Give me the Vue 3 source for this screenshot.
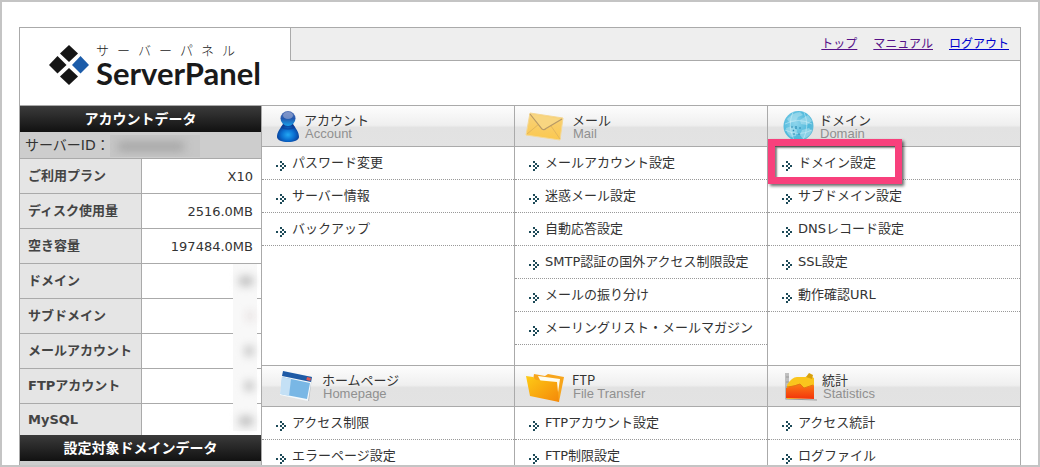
<script setup>
const logoRuby = [...'サーバーパネル']

const nav = [
  { text: 'トップ', visited: true },
  { text: 'マニュアル', visited: true },
  { text: 'ログアウト', visited: false },
]

const account = [
  { label: 'ご利用プラン', value: 'X10' },
  { label: 'ディスク使用量', value: '2516.0MB' },
  { label: '空き容量', value: '197484.0MB' },
  { label: 'ドメイン', mask: 'wide' },
  { label: 'サブドメイン', mask: 'faint' },
  { label: 'メールアカウント', mask: 'narrow' },
  { label: 'FTPアカウント', mask: 'narrow' },
  { label: 'MySQL', mask: 'wide' },
]

const sections = [
  { icon: 'account', title: 'アカウント', sub: 'Account', links: ['パスワード変更', 'サーバー情報', 'バックアップ'] },
  { icon: 'mail', title: 'メール', sub: 'Mail', links: ['メールアカウント設定', '迷惑メール設定', '自動応答設定', 'SMTP認証の国外アクセス制限設定', 'メールの振り分け', 'メーリングリスト・メールマガジン'] },
  { icon: 'domain', title: 'ドメイン', sub: 'Domain', marked: 'ドメイン設定', links: ['ドメイン設定', 'サブドメイン設定', 'DNSレコード設定', 'SSL設定', '動作確認URL'] },
  { icon: 'home', title: 'ホームページ', sub: 'Homepage', links: ['アクセス制限', 'エラーページ設定'] },
  { icon: 'ftp', title: 'FTP', sub: 'File Transfer', links: ['FTPアカウント設定', 'FTP制限設定'] },
  { icon: 'stats', title: '統計', sub: 'Statistics', links: ['アクセス統計', 'ログファイル'] },
]
</script>

<template>
  <div class="frame">
    <div class="panel">
      <header class="top">
        <div class="brand">
          <svg class="mark" width="42" height="42" viewBox="0 0 42 42" aria-hidden="true">
            <path d="M21 1l9 8.500-9 8.500-9-8.500z" fill="#151515" />
            <path d="M9.500 12l9 9-9 8.500-8.500-8.500z" fill="#151515" />
            <path d="M32.500 12l8.500 9-8.500 8.500-8.500-8.500z" fill="#1c5ca9" />
            <path d="M21 24l9 8.500-9 8.500-9-8.500z" fill="#151515" />
          </svg>
          <div class="wordmark">
            <div class="ruby"><span v-for="(c, i) in logoRuby" :key="i">{{ c }}</span></div>
            <div class="name">ServerPanel</div>
          </div>
        </div>
        <nav class="nav">
          <a v-for="n in nav" :key="n.text" href="#" :class="{ visited: n.visited }">{{ n.text }}</a>
        </nav>
      </header>

      <div class="body">
        <aside class="side">
          <h2 class="bar">アカウントデータ</h2>
          <div class="server">サーバーID：<span class="blurred"><i></i></span></div>
          <table class="data">
            <tbody>
              <tr v-for="row in account" :key="row.label">
                <th scope="row">{{ row.label }}</th>
                <td>
                  {{ row.value }}
                  <span v-if="row.mask" class="mask" :class="row.mask"></span>
                </td>
              </tr>
            </tbody>
          </table>
          <h2 class="bar">設定対象ドメインデータ</h2>
          <div class="server"></div>
        </aside>

        <main class="grid">
          <section v-for="s in sections" :key="s.sub" class="group">
            <div class="head">
              <svg v-if="s.icon === 'account'" width="32" height="40" viewBox="0 0 32 40" aria-hidden="true">
                <defs>
                  <radialGradient id="body" cx=".5" cy=".6" r=".6">
                    <stop offset="0" stop-color="#22a8f4" /><stop offset=".5" stop-color="#0a6ed0" /><stop offset="1" stop-color="#0b3186" />
                  </radialGradient>
                  <linearGradient id="ball" x2="0" y2="1">
                    <stop offset="0" stop-color="#5c78b8" /><stop offset=".5" stop-color="#2358ae" /><stop offset="1" stop-color="#19a0ea" />
                  </linearGradient>
                </defs>
                <path d="M11 18c-3 5-6 8-6 13 0 3 5 5 11 5s11-2 11-5c0-5-3-8-6-13z" fill="url(#body)" />
                <circle cx="16" cy="12.500" r="7.500" fill="url(#ball)" />
                <ellipse cx="16" cy="9.500" rx="5" ry="3.500" fill="#9aa9d2" opacity=".65" />
                <path d="M9 21q7 4 14 0" fill="none" stroke="#0b3b96" stroke-width="1.500" opacity=".6" />
              </svg>
              <svg v-else-if="s.icon === 'mail'" width="47" height="40" viewBox="0 0 47 40" aria-hidden="true">
                <defs><linearGradient id="env" x2="0" y2="1"><stop offset="0" stop-color="#f8d27b" /><stop offset="1" stop-color="#fbc84e" /></linearGradient></defs>
                <path d="M5 7l33 5-3 22-34-5z" fill="url(#env)" stroke="#f5d894" />
                <path d="M2 28l12-10M35 33l-9-13" stroke="#e3b65c" fill="none" />
                <path d="M5 8l12 15q2 1.500 4-.5L37 13" fill="#f8d681" stroke="#b89a66" stroke-width="1.200" />
              </svg>
              <svg v-else-if="s.icon === 'domain'" width="41" height="40" viewBox="0 0 41 40" aria-hidden="true">
                <defs><radialGradient id="globe" cx=".4" cy=".4" r=".65"><stop offset="0" stop-color="#8fd5ec" /><stop offset=".7" stop-color="#50b9dc" /><stop offset="1" stop-color="#65bdd9" /></radialGradient></defs>
                <circle cx="20.500" cy="20" r="15" fill="url(#globe)" />
                <path d="M9 13q5-6 13-7l3 3-5 2-2 4-6 2zM22 14l8-5 4 6-5 4-6-1zM8 22l6-2 5 4-1 6-5 1q-5-4-5-9zM24 24l7-2 3 3q-3 6-9 8l-3-4z" fill="#b5e4f1" opacity=".55" />
                <path d="M7 18q13-7 27 0M7 24q14 7 27 0M15 6q-6 14 1 28M26 6q6 14-1 28" fill="none" stroke="#d7f3fa" stroke-width=".5" />
                <path d="M13 21h2M15 24l1 1M18 20v3M21 22h2M15 28h2M20 28h2" stroke="#2e8cb4" stroke-width="1.200" />
              </svg>
              <svg v-else-if="s.icon === 'home'" width="50" height="40" viewBox="0 0 50 40" aria-hidden="true">
                <path d="M11 6l29 5-3 24-3-1z" fill="#b7bdc3" />
                <path d="M11 5l29 6-4 24-28-6z" fill="#f4f9fc" />
                <path d="M11 5l29 6-1 5-29-6z" fill="#1e5aa5" />
                <path d="M35 11l4 1-.7 3-4-1z" fill="#da5957" />
                <path d="M10 11l28 6-3 16-26-5z" fill="#79b7e5" />
                <path d="M10 11l9 2-2 17-9-2z" fill="#c4e0f5" />
              </svg>
              <svg v-else-if="s.icon === 'ftp'" width="47" height="40" viewBox="0 0 47 40" aria-hidden="true">
                <defs><linearGradient id="fold" x2="1" y2="1"><stop offset="0" stop-color="#fecb16" /><stop offset="1" stop-color="#f48809" /></linearGradient></defs>
                <path d="M9 8l11 2 3-2 16 3-5 25L7 20z" fill="#f7a51c" />
                <path d="M13 10l22 3-3 20-15-15z" fill="#fffdf0" />
                <path d="M1 10l7 1 3 3 21 2 2 20-29-6z" fill="url(#fold)" />
              </svg>
              <svg v-else width="44" height="40" viewBox="0 0 44 40" aria-hidden="true">
                <defs><linearGradient id="area" x2="0" y2="1"><stop offset="0" stop-color="#fb7b17" /><stop offset="1" stop-color="#f3340b" /></linearGradient></defs>
                <path d="M8 7v26l31 1M8 11h3M8 16h3M8 21h3M10 7v20" fill="none" stroke="#9b9b9b" stroke-width="1.200" />
                <path d="M9 19q5-8 10-8l8 0 5-1 4 2v20l-27 1z" fill="#fac51d" />
                <path d="M28 11l3-4 4 2-1 4z" fill="#d8a00c" />
                <path d="M8 22l6-2 8-2 4 4 10-3v14l-28-1z" fill="url(#area)" />
                <path d="M9 21l7-1 6-2 4 4 9-3" fill="none" stroke="#e37712" />
              </svg>
              <div>
                <h3>{{ s.title }}</h3>
                <p>{{ s.sub }}</p>
              </div>
            </div>
            <ul>
              <li v-for="l in s.links" :key="l">
                <svg class="arrow" width="10" height="10" viewBox="0 0 10 10" aria-hidden="true" shape-rendering="crispEdges">
                  <path d="M0 4h2v2H0zM4 0h2v2H4zM6 2h2v2H6zM8 4h2v2H8zM6 6h2v2H6zM4 8h2v2H4zM4 4h2v2H4z" fill="#1d4a58" />
                </svg>
                <a href="#">{{ l }}</a>
                <span v-if="l === s.marked" class="callout"></span>
              </li>
            </ul>
          </section>
        </main>
      </div>
    </div>
  </div>
</template>

<style>
body { margin: 0; background: #fff; }
</style>

<style scoped>
* { box-sizing: border-box; }
h2, h3, p, ul { margin: 0; padding: 0; font-weight: normal; }
.frame {
  height: 100vh;
  overflow: hidden;
  border: 2px solid #c4c4c4;
  padding: 25px 17px 0;
  font: 13px/20px "DejaVu Sans", "Noto Sans CJK JP", sans-serif;
  color: #333;
}
.panel { border: 1px solid #aaa; border-bottom: 0; }
.top { display: flex; align-items: flex-start; height: 78px; border-bottom: 1px solid #aaa; }
.brand { display: flex; width: 270px; padding: 15px 0 0 28px; gap: 6px; }
.mark { margin-top: 1px; }
.wordmark { color: #1a1a1a; }
.ruby { display: flex; gap: 8px; line-height: 14px; font-family: "Noto Sans CJK JP", sans-serif; font-weight: 300; }
.name { font: 700 31px/32px Lato, "Open Sans", sans-serif; }
.nav {
  flex: 1;
  display: flex;
  justify-content: flex-end;
  gap: 16px;
  height: 33px;
  padding: 6px 11px 0 0;
  background: #eee;
  border-left: 1px solid #aaa;
  border-bottom: 1px solid #aaa;
  font-size: 12px;
}
.nav a { color: #00c; }
.nav a.visited { color: #518; }
.body { display: flex; align-items: stretch; }
.side { width: 242px; border-right: 1px solid #aaa; background: #cdcdcd; }
.bar {
  height: 26px;
  text-align: center;
  font-size: 14px;
  line-height: 26px;
  font-weight: bold;
  color: #fff;
  background: linear-gradient(#3b3b3b, #111);
}
.server { display: flex; height: 27px; padding-left: 5px; font-size: 14px; line-height: 26px; border-bottom: 1px solid #aaa; }
.blurred { width: 90px; height: 22px; margin-top: 3px; background: #c6c6c6; overflow: hidden; }
.blurred i { display: block; width: 66px; height: 9px; margin: 7px 0 0 8px; background: #a4a4a4; filter: blur(5px); }
.data { width: 100%; border-collapse: separate; border-spacing: 0; }
.data th {
  width: 122px;
  height: 35px;
  padding: 0 0 0 8px;
  text-align: left;
  color: #444;
  background: #e5e5e5;
  border-right: 1px solid #aaa;
  border-bottom: 1px solid #aaa;
  white-space: nowrap;
}
.data td { position: relative; padding: 2px 8px 0 0; text-align: right; background: #fff; border-bottom: 1px solid #aaa; }
.data tr:last-child > * { height: 31px; border-bottom: 0; }
.mask { position: absolute; right: 4px; top: 0; bottom: -1px; width: 24px; background: #f8f8f8; }
.data tr:last-child .mask { bottom: 4px; }
.mask::after { content: ""; position: absolute; right: 4px; top: 12px; width: 14px; height: 10px; background: #c0c0c0; filter: blur(4px); }
.mask.narrow::after { width: 8px; }
.mask.faint::after { width: 6px; background: #e4dcdc; }
.grid { flex: 1; display: grid; grid-template-columns: repeat(3, 1fr); gap: 1px; background: #aaa; }
.group { background: #fff; padding-bottom: 20px; }
.head {
  display: flex;
  height: 41px;
  padding-left: 10px;
  border-bottom: 1px solid #aaa;
  background: linear-gradient(#fdfdfd, #efefef 48%, #e2e2e2 54%, #e3e3e3);
}
.head div { padding-top: 7px; }
h3 { font: 13px/13px "Noto Sans CJK JP", sans-serif; }
.head p { padding-left: 1px; font: 13px/16px "Liberation Sans", Arial, sans-serif; color: #909090; }
ul { list-style: none; }
li { position: relative; display: flex; align-items: center; gap: 6px; height: 33px; padding-left: 14px; border-bottom: 1px dotted #999; }
.arrow { margin-top: 6px; }
li a { color: #333; text-decoration: none; white-space: nowrap; }
.callout {
  position: absolute;
  left: 0;
  top: -8px;
  width: 134px;
  height: 45px;
  border: 7px solid #f8407c;
  box-shadow: 2px 2px 3px rgba(0, 0, 0, .6), inset 2px 2px 2px rgba(0, 0, 0, .5);
  pointer-events: none;
}
</style>
